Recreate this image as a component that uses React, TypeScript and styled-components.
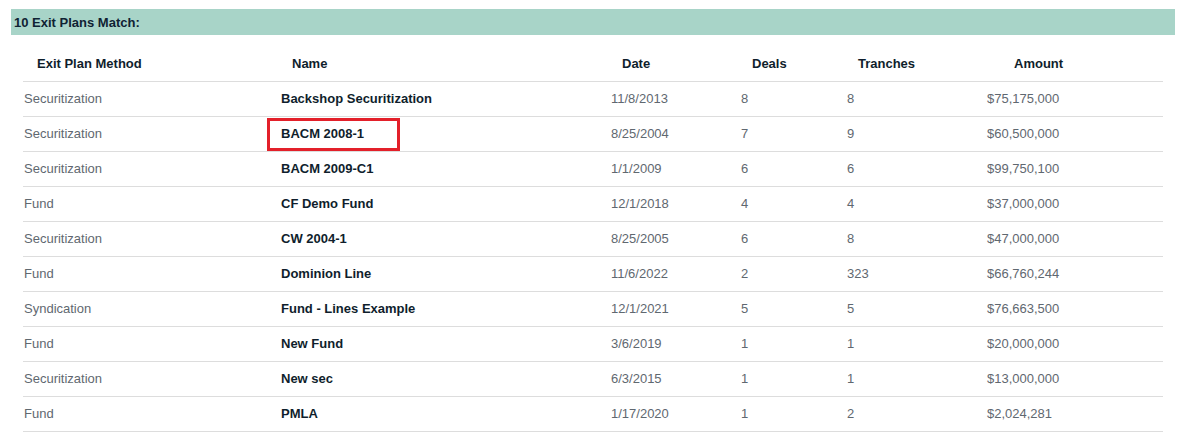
import React from "react";
import styled, { createGlobalStyle } from "styled-components";

const Global = createGlobalStyle`
  html, body { margin: 0; padding: 0; background: #ffffff; }
  body { font-family: "Liberation Sans", Arial, Helvetica, sans-serif; }
`;

const Page = styled.div`
  padding: 9px 9px 0 11px;
`;

const Banner = styled.div`
  height: 26px;
  background: #a8d4c8;
  display: flex;
  align-items: center;
  padding-left: 3px;
  font-size: 13px;
  font-weight: bold;
  color: #0f2233;
`;

const Table = styled.div`
  margin: 0 12px;
`;

const cols = "258px 329px 130px 106px 140px 1fr";

const HeadRow = styled.div`
  display: grid;
  grid-template-columns: ${cols};
  border-bottom: 1px solid #dddddd;
`;

const HeadCell = styled.div<{ $pad: number }>`
  padding: 21px 0 9px ${(p) => p.$pad}px;
  line-height: 16px;
  font-size: 13px;
  font-weight: bold;
  color: #0f1e2c;
`;

const Row = styled.div`
  display: grid;
  grid-template-columns: ${cols};
  border-bottom: 1px solid #dddddd;
`;

const Cell = styled.div<{ $strong?: boolean }>`
  position: relative;
  padding: 9px 0 9px ${(p) => (p.$strong ? 0 : 1)}px;
  line-height: 16px;
  font-size: 13px;
  font-weight: ${(p) => (p.$strong ? "bold" : "normal")};
  color: ${(p) => (p.$strong ? "#0f1e2c" : "#5f6870")};
`;

const Highlight = styled.span`
  position: absolute;
  top: 1px;
  left: -14px;
  width: 133px;
  height: 33px;
  box-sizing: border-box;
  border: 3px solid #e3202a;
  pointer-events: none;
`;

const headers: [string, number][] = [
  ["Exit Plan Method", 14],
  ["Name", 11],
  ["Date", 12],
  ["Deals", 12],
  ["Tranches", 12],
  ["Amount", 28],
];

const rows = [
  ["Securitization", "Backshop Securitization", "11/8/2013", "8", "8", "$75,175,000"],
  ["Securitization", "BACM 2008-1", "8/25/2004", "7", "9", "$60,500,000"],
  ["Securitization", "BACM 2009-C1", "1/1/2009", "6", "6", "$99,750,100"],
  ["Fund", "CF Demo Fund", "12/1/2018", "4", "4", "$37,000,000"],
  ["Securitization", "CW 2004-1", "8/25/2005", "6", "8", "$47,000,000"],
  ["Fund", "Dominion Line", "11/6/2022", "2", "323", "$66,760,244"],
  ["Syndication", "Fund - Lines Example", "12/1/2021", "5", "5", "$76,663,500"],
  ["Fund", "New Fund", "3/6/2019", "1", "1", "$20,000,000"],
  ["Securitization", "New sec", "6/3/2015", "1", "1", "$13,000,000"],
  ["Fund", "PMLA", "1/17/2020", "1", "2", "$2,024,281"],
];

export default function App() {
  return (
    <Page>
      <Global />
      <Banner>10 Exit Plans Match:</Banner>
      <Table>
        <HeadRow>
          {headers.map(([h, pad]) => (
            <HeadCell key={h} $pad={pad}>
              {h}
            </HeadCell>
          ))}
        </HeadRow>
        {rows.map((r, i) => (
          <Row key={i}>
            {r.map((c, j) => (
              <Cell key={j} $strong={j === 1}>
                {j === 1 && i === 1 && <Highlight />}
                {c}
              </Cell>
            ))}
          </Row>
        ))}
      </Table>
    </Page>
  );
}
